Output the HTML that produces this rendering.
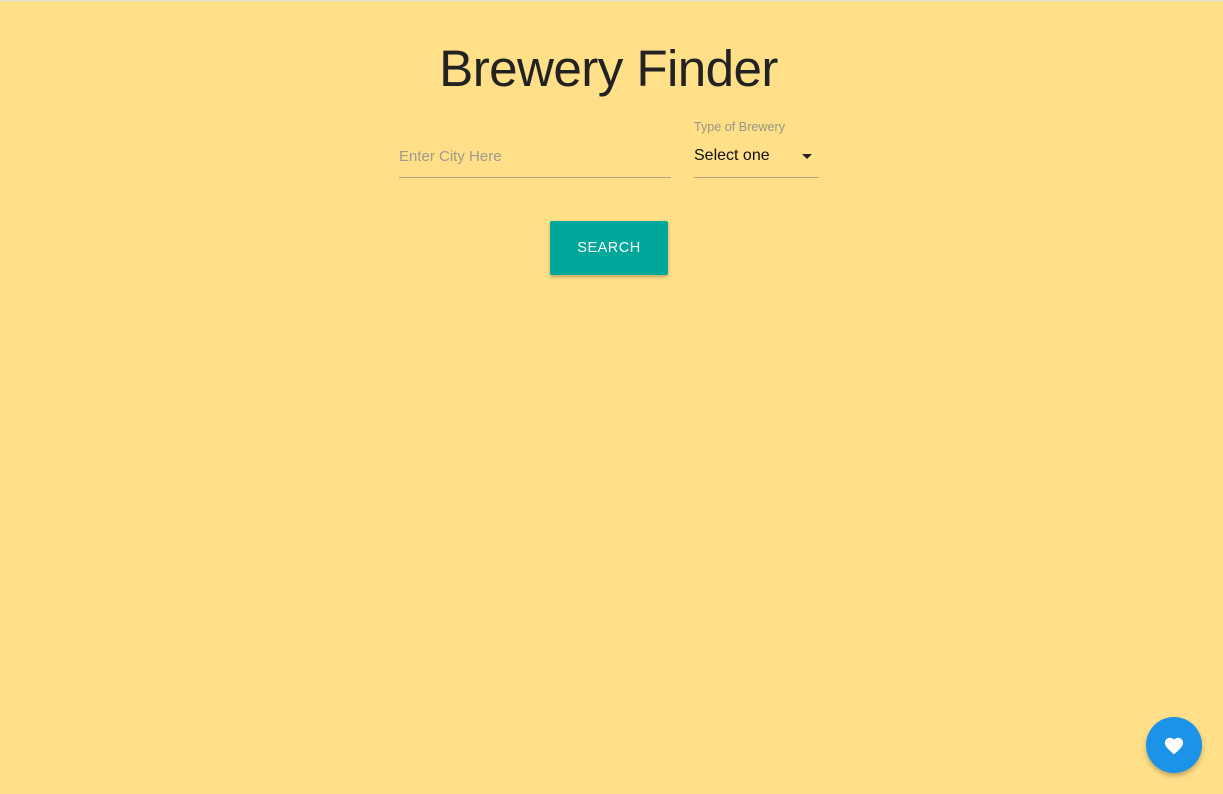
<!DOCTYPE html>
<html><head><meta charset="utf-8"><style>
html,body{margin:0;padding:0;width:1223px;height:794px;overflow:hidden;background:#ffdf87;font-family:"Liberation Sans",sans-serif;}
body{border-top:1px solid #ddd;box-sizing:border-box;position:relative}
h1{position:absolute;left:0;right:0;top:38px;margin:0;text-align:center;font-weight:400;font-size:51.2px;color:#222;letter-spacing:-0.6px;padding-right:6px}
.in{position:absolute;left:399px;top:176px;width:272px;height:1px;background:#b5a27a}
.ph{position:absolute;left:399px;top:147px;font-size:15px;color:#9e9a8e}
.lab{position:absolute;left:694px;top:119px;font-size:12.6px;color:#9a9486}
.sel{position:absolute;left:694px;top:146px;font-size:16px;color:#111}
.arr{position:absolute;left:802px;top:153px;width:0;height:0;border-left:5px solid transparent;border-right:5px solid transparent;border-top:5px solid #222}
.in2{position:absolute;left:694px;top:176px;width:125px;height:1px;background:#b5a27a}
.btn{position:absolute;left:550px;top:220px;width:118px;height:54px;background:#00a79b;border-radius:2px;color:#fff;font-size:14.5px;letter-spacing:0.5px;display:flex;align-items:center;justify-content:center;box-shadow:0 2px 3px rgba(0,0,0,.25)}
.fab{position:absolute;left:1146px;top:716px;width:56px;height:56px;border-radius:50%;background:#1a93e8;box-shadow:0 3px 5px rgba(0,0,0,.25);display:flex;align-items:center;justify-content:center}
</style></head><body>
<h1>Brewery Finder</h1>
<div class="ph">Enter City Here</div><div class="in"></div>
<div class="lab">Type of Brewery</div><div class="sel">Select one</div><div class="arr"></div><div class="in2"></div>
<div class="btn">SEARCH</div>
<div class="fab"><svg width="22" height="20" viewBox="0 0 24 22"><path d="M12 21.35l-1.45-1.32C5.4 15.36 2 12.28 2 8.5 2 5.42 4.42 3 7.5 3c1.74 0 3.41.81 4.5 2.09C13.09 3.81 14.76 3 16.5 3 19.58 3 22 5.42 22 8.5c0 3.78-3.4 6.86-8.55 11.54L12 21.35z" fill="#fff"/></svg></div>
</body></html>
